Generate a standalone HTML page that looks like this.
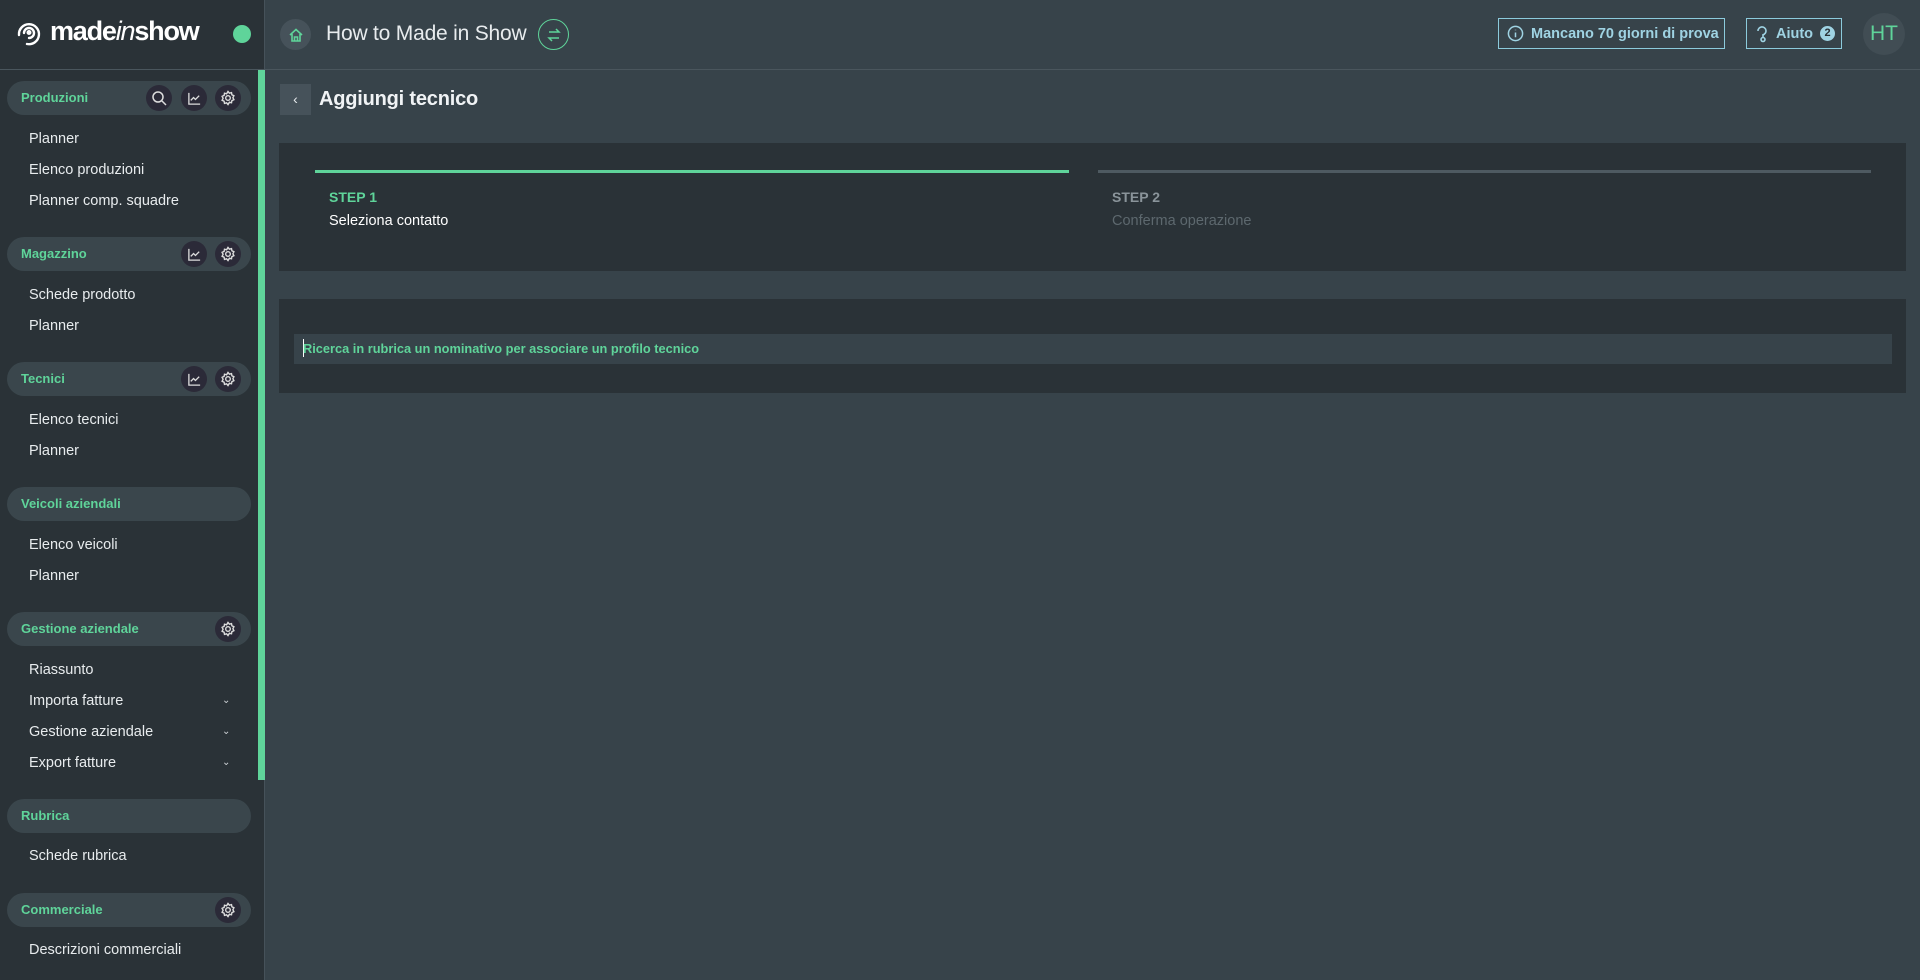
<!DOCTYPE html>
<html><head><meta charset="utf-8"><style>
*{box-sizing:border-box;margin:0;padding:0}
body{width:1920px;height:980px;overflow:hidden;background:#37434a;font-family:"Liberation Sans",sans-serif;color:#e8ecee;position:relative}
.sb{position:absolute;left:0;top:0;width:265px;height:980px;background:#2a3237;border-right:1px solid #46525a}
.logo{position:absolute;left:14px;top:16px;font-size:27px;font-weight:700;color:#fff;letter-spacing:-1.2px;display:flex;align-items:center;gap:6px}
.dot{position:absolute;left:233px;top:25px;width:18px;height:18px;border-radius:50%;background:#5fd49a}
.hline{position:absolute;left:0;top:69px;width:1920px;height:1px;background:#4a565d}
.gbar{position:absolute;left:258px;top:70px;width:7px;height:710px;background:#5fd49a}
.pill{position:absolute;left:7px;width:244px;height:34px;border-radius:17px;background:#3a464c;color:#5fd49a;font-size:13px;font-weight:700;padding-left:14px;line-height:34px}
.ic{position:absolute;top:4px;width:26px;height:26px;border-radius:50%;background:#2b2a38;display:flex;align-items:center;justify-content:center}
.it{position:absolute;left:29px;font-size:14.5px;color:#e8ecee}
.chev{position:absolute;left:222px;font-size:10px;color:#cfd4d8}
.hdr{position:absolute;left:326px;top:22px;font-size:21px;color:#e8ecee;letter-spacing:-0.2px}
.box{position:absolute;top:18px;height:31px;border:1px solid #8ccbdc;color:#9fd3e3;font-size:14.5px;font-weight:700;display:flex;align-items:center;padding-left:8px;gap:7px}
.card{position:absolute;left:279px;width:1627px;background:#2a3237}
</style></head><body>
<div class="sb"></div>
<div class="logo"><svg width="30" height="30" viewBox="0 0 30 30" fill="none" stroke="#fff" stroke-width="2.4" stroke-linecap="round"><path d="M5 18a10 10 0 1 1 8 9"/><path d="M10 16a5 5 0 1 1 5 5"/><circle cx="15" cy="15.5" r="1.3" fill="#fff"/></svg><span style="font-weight:600">made<i style="font-weight:400">in</i>show</span></div>
<div class="dot"></div>
<div class="hline"></div>
<div class="gbar"></div>

<div style="position:absolute;left:280px;top:19px;width:31px;height:31px;border-radius:50%;background:#46525a;display:flex;align-items:center;justify-content:center"><svg width="16" height="16" viewBox="0 0 16 16" fill="none" stroke="#5fd49a" stroke-width="1.6"><path d="M2 8L8 2.5 14 8M4 7v7h8V7M6.5 14v-4h3v4"/></svg></div>
<div class="hdr">How to Made in Show</div>
<div style="position:absolute;left:538px;top:19px;width:31px;height:31px;border-radius:50%;border:1.5px solid #5fd49a;display:flex;align-items:center;justify-content:center"><svg width="16" height="16" viewBox="0 0 16 16" fill="none" stroke="#5fd49a" stroke-width="1.5"><path d="M3 5h10l-3-3M13 11H3l3 3"/></svg></div>
<div class="box" style="left:1498px;width:227px"><svg width="17" height="17" viewBox="0 0 18 18" fill="none" stroke="#9fd3e3" stroke-width="1.6"><circle cx="9" cy="9" r="7.5"/><path d="M9 8v5M9 5v.5"/></svg>Mancano 70 giorni di prova</div>
<div class="box" style="left:1746px;width:96px"><svg width="14" height="18" viewBox="0 0 14 18" fill="none" stroke="#9fd3e3" stroke-width="1.6"><path d="M3 6a4 4 0 1 1 5 3.8V12"/><circle cx="8" cy="14.5" r="2"/></svg>Aiuto <span style="display:inline-block;width:15px;height:15px;border-radius:50%;background:#9fd3e3;color:#2a3237;font-size:11px;text-align:center;line-height:15px">2</span></div>
<div style="position:absolute;left:1863px;top:13px;width:42px;height:42px;border-radius:50%;background:#414d54;color:#5fd49a;font-size:21px;text-align:center;line-height:42px">HT</div>

<!-- sidebar -->
<div class="pill" style="top:81px">Produzioni
 <div class="ic" style="left:139px"><svg width="16" height="16" viewBox="0 0 16 16" fill="none" stroke="#ddd" stroke-width="1.5"><circle cx="7" cy="7" r="5"/><path d="M11 11l4 4"/></svg></div>
 <div class="ic" style="left:174px"><svg width="15" height="15" viewBox="0 0 16 16" fill="none" stroke="#ddd" stroke-width="1.4"><path d="M2 2v12h12M4 10l3-3 2 2 4-4"/></svg></div>
 <div class="ic" style="left:208px"><svg width="16" height="16" viewBox="0 0 16 16" fill="none" stroke="#ddd" stroke-width="1.4"><circle cx="8" cy="8" r="2.3"/><path d="M8 1.5l1.4 1.7 2.1-.6.4 2.2 2 .9-1 2 1 2-2 .9-.4 2.2-2.1-.6L8 14.5l-1.4-1.7-2.1.6-.4-2.2-2-.9 1-2-1-2 2-.9.4-2.2 2.1.6z"/></svg></div>
</div>
<div class="it" style="top:131px">Planner</div>
<div class="it" style="top:162px">Elenco produzioni</div>
<div class="it" style="top:193px">Planner comp. squadre</div>

<div class="pill" style="top:237px">Magazzino
 <div class="ic" style="left:174px"><svg width="15" height="15" viewBox="0 0 16 16" fill="none" stroke="#ddd" stroke-width="1.4"><path d="M2 2v12h12M4 10l3-3 2 2 4-4"/></svg></div>
 <div class="ic" style="left:208px"><svg width="16" height="16" viewBox="0 0 16 16" fill="none" stroke="#ddd" stroke-width="1.4"><circle cx="8" cy="8" r="2.3"/><path d="M8 1.5l1.4 1.7 2.1-.6.4 2.2 2 .9-1 2 1 2-2 .9-.4 2.2-2.1-.6L8 14.5l-1.4-1.7-2.1.6-.4-2.2-2-.9 1-2-1-2 2-.9.4-2.2 2.1.6z"/></svg></div>
</div>
<div class="it" style="top:287px">Schede prodotto</div>
<div class="it" style="top:318px">Planner</div>

<div class="pill" style="top:362px">Tecnici
 <div class="ic" style="left:174px"><svg width="15" height="15" viewBox="0 0 16 16" fill="none" stroke="#ddd" stroke-width="1.4"><path d="M2 2v12h12M4 10l3-3 2 2 4-4"/></svg></div>
 <div class="ic" style="left:208px"><svg width="16" height="16" viewBox="0 0 16 16" fill="none" stroke="#ddd" stroke-width="1.4"><circle cx="8" cy="8" r="2.3"/><path d="M8 1.5l1.4 1.7 2.1-.6.4 2.2 2 .9-1 2 1 2-2 .9-.4 2.2-2.1-.6L8 14.5l-1.4-1.7-2.1.6-.4-2.2-2-.9 1-2-1-2 2-.9.4-2.2 2.1.6z"/></svg></div>
</div>
<div class="it" style="top:412px">Elenco tecnici</div>
<div class="it" style="top:443px">Planner</div>

<div class="pill" style="top:487px">Veicoli aziendali</div>
<div class="it" style="top:537px">Elenco veicoli</div>
<div class="it" style="top:568px">Planner</div>

<div class="pill" style="top:612px">Gestione aziendale
 <div class="ic" style="left:208px"><svg width="16" height="16" viewBox="0 0 16 16" fill="none" stroke="#ddd" stroke-width="1.4"><circle cx="8" cy="8" r="2.3"/><path d="M8 1.5l1.4 1.7 2.1-.6.4 2.2 2 .9-1 2 1 2-2 .9-.4 2.2-2.1-.6L8 14.5l-1.4-1.7-2.1.6-.4-2.2-2-.9 1-2-1-2 2-.9.4-2.2 2.1.6z"/></svg></div>
</div>
<div class="it" style="top:662px">Riassunto</div>
<div class="it" style="top:693px">Importa fatture</div><div class="chev" style="top:695px">&#8964;</div>
<div class="it" style="top:724px">Gestione aziendale</div><div class="chev" style="top:726px">&#8964;</div>
<div class="it" style="top:755px">Export fatture</div><div class="chev" style="top:757px">&#8964;</div>

<div class="pill" style="top:799px">Rubrica</div>
<div class="it" style="top:848px">Schede rubrica</div>

<div class="pill" style="top:893px">Commerciale
 <div class="ic" style="left:208px"><svg width="16" height="16" viewBox="0 0 16 16" fill="none" stroke="#ddd" stroke-width="1.4"><circle cx="8" cy="8" r="2.3"/><path d="M8 1.5l1.4 1.7 2.1-.6.4 2.2 2 .9-1 2 1 2-2 .9-.4 2.2-2.1-.6L8 14.5l-1.4-1.7-2.1.6-.4-2.2-2-.9 1-2-1-2 2-.9.4-2.2 2.1.6z"/></svg></div>
</div>
<div class="it" style="top:942px">Descrizioni commerciali</div>

<!-- main -->
<div style="position:absolute;left:280px;top:84px;width:31px;height:31px;background:#46525a;color:#e8ecee;font-size:14px;text-align:center;line-height:31px">&#8249;</div>
<div style="position:absolute;left:319px;top:88px;font-size:20px;font-weight:700;color:#f0f3f5;letter-spacing:-0.2px">Aggiungi tecnico</div>

<div class="card" style="top:143px;height:128px">
 <div style="position:absolute;left:36px;top:27px;width:754px;height:3px;background:#5fd49a"></div>
 <div style="position:absolute;left:819px;top:27px;width:773px;height:3px;background:#4e5a61"></div>
 <div style="position:absolute;left:50px;top:46px;font-size:14px;font-weight:700;color:#5fd49a">STEP 1</div>
 <div style="position:absolute;left:50px;top:70px;font-size:14.5px;color:#fff">Seleziona contatto</div>
 <div style="position:absolute;left:833px;top:46px;font-size:14px;font-weight:700;color:#8a949a">STEP 2</div>
 <div style="position:absolute;left:833px;top:70px;font-size:14.5px;color:#5d686e">Conferma operazione</div>
</div>
<div class="card" style="top:299px;height:94px">
 <div style="position:absolute;left:15px;top:35px;width:1598px;height:30px;background:#37434a"></div>
 <div style="position:absolute;left:24px;top:40px;width:1px;height:18px;background:#fff"></div>
 <div style="position:absolute;left:24px;top:42px;font-size:12.8px;font-weight:700;color:#5fd49a">Ricerca in rubrica un nominativo per associare un profilo tecnico</div>
</div>
</body></html>
